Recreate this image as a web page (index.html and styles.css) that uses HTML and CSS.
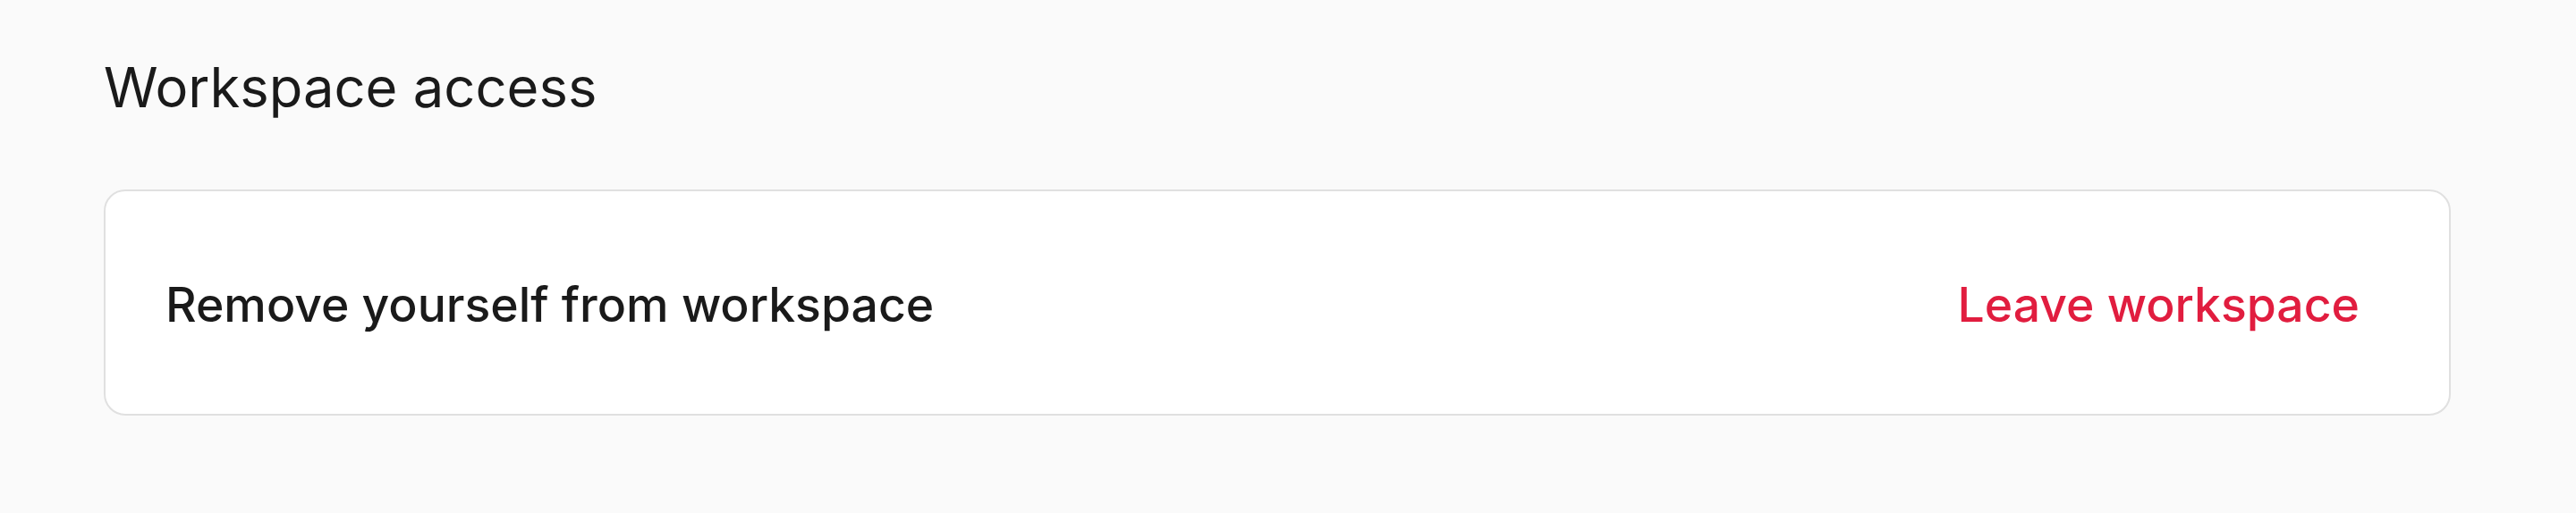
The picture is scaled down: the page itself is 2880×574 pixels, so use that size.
FILE: index.html
```html
<!DOCTYPE html>
<html lang="en">
<head>
<meta charset="utf-8">
<title>Workspace access</title>
<link rel="stylesheet" href="styles.css">
</head>
<body>
<main class="page">
  <section class="section">
    <h2 class="section-title">Workspace access</h2>
    <div class="card">
      <div class="row">
        <span class="row-label">Remove yourself from workspace</span>
        <button class="danger-link" type="button">Leave workspace</button>
      </div>
    </div>
  </section>
</main>
</body>
</html>
```

FILE: styles.css
```css
html, body {
  margin: 0;
  padding: 0;
  background: #fafafa;
}

body {
  font-family: Inter, "Noto Sans", "Liberation Sans", sans-serif;
  color: #1a1a1a;
}

.page {
  padding: 61px 140px 0 116px;
}

.section {
  display: flex;
  flex-direction: column;
  gap: 77px;
}

.section-title {
  margin: 0;
  font-size: 61.5px;
  line-height: 74px;
  font-weight: 400;
  color: #1a1a1a;
}

.card {
  background: #ffffff;
  border: 2px solid #e0e0e0;
  border-radius: 24px;
  height: 253px;
  box-sizing: border-box;
  display: flex;
  align-items: center;
  padding: 4px 70px 0 67px;
}

.row {
  flex: 1;
  display: flex;
  align-items: center;
  justify-content: space-between;
}

.row-label {
  font-size: 53.5px;
  line-height: 64px;
  font-weight: 500;
  color: #1a1a1a;
}

.danger-link {
  background: none;
  border: 0;
  padding: 0 30px;
  font-family: inherit;
  font-size: 53.5px;
  line-height: 64px;
  font-weight: 500;
  color: #e11d3f;
  cursor: pointer;
}
```
